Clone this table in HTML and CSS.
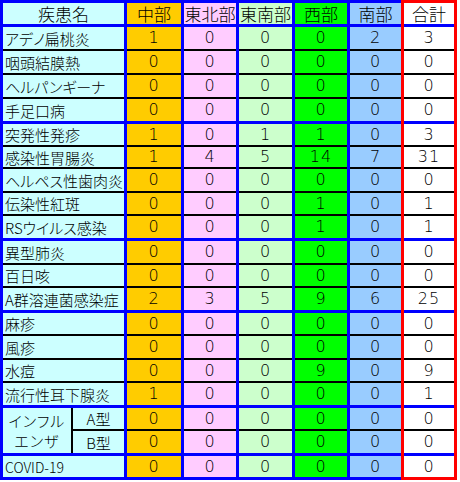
FILE: index.html
```html
<!DOCTYPE html>
<html lang="ja">
<head>
<meta charset="utf-8">
<title>疾患別報告数</title>
<link rel="stylesheet" href="styles.css">
</head>
<body>
<div class="board">
  <div class="main">
    <div class="col name">
      <div class="hd">疾患名</div>
      <div class="c h22 k">アデノ扁桃炎</div>
      <div class="c h22 k">咽頭結膜熱</div>
      <div class="c h22 k">ヘルパンギーナ</div>
      <div class="c h22 b">手足口病</div>
      <div class="c h21 k">突発性発疹</div>
      <div class="c h20 k">感染性胃腸炎</div>
      <div class="c h22 k">ヘルペス性歯肉炎</div>
      <div class="c h21 k">伝染性紅斑</div>
      <div class="c h22 b">RSウイルス感染</div>
      <div class="c h22 k">異型肺炎</div>
      <div class="c h21 k">百日咳</div>
      <div class="c h22 b">A群溶連菌感染症</div>
      <div class="c h21 k">麻疹</div>
      <div class="c h22 k">風疹</div>
      <div class="c h21 k">水痘</div>
      <div class="c h22 b">流行性耳下腺炎</div>
      <div class="flu">
        <div class="flu-name">インフル<br>エンザ</div>
        <div class="flu-types">
          <div class="c h21 k">A型</div>
          <div class="c h22">B型</div>
        </div>
      </div>
      <div class="c h21 covid">COVID-19</div>
    </div>
    <div class="col num chubu">
      <div class="hd">中部</div>
      <div class="c h22 k">1</div><div class="c h22 k">0</div><div class="c h22 k">0</div><div class="c h22 b">0</div>
      <div class="c h21 k">1</div><div class="c h20 k">1</div><div class="c h22 k">0</div><div class="c h21 k">0</div><div class="c h22 b">0</div>
      <div class="c h22 k">0</div><div class="c h21 k">0</div><div class="c h22 b">2</div>
      <div class="c h21 k">0</div><div class="c h22 k">0</div><div class="c h21 k">0</div><div class="c h22 b">1</div>
      <div class="c h21 k">0</div><div class="c h22 b">0</div><div class="c h21">0</div>
    </div>
    <div class="col num tohoku">
      <div class="hd">東北部</div>
      <div class="c h22 k">0</div><div class="c h22 k">0</div><div class="c h22 k">0</div><div class="c h22 b">0</div>
      <div class="c h21 k">0</div><div class="c h20 k">4</div><div class="c h22 k">0</div><div class="c h21 k">0</div><div class="c h22 b">0</div>
      <div class="c h22 k">0</div><div class="c h21 k">0</div><div class="c h22 b">3</div>
      <div class="c h21 k">0</div><div class="c h22 k">0</div><div class="c h21 k">0</div><div class="c h22 b">0</div>
      <div class="c h21 k">0</div><div class="c h22 b">0</div><div class="c h21">0</div>
    </div>
    <div class="col num tonan">
      <div class="hd">東南部</div>
      <div class="c h22 k">0</div><div class="c h22 k">0</div><div class="c h22 k">0</div><div class="c h22 b">0</div>
      <div class="c h21 k">1</div><div class="c h20 k">5</div><div class="c h22 k">0</div><div class="c h21 k">0</div><div class="c h22 b">0</div>
      <div class="c h22 k">0</div><div class="c h21 k">0</div><div class="c h22 b">5</div>
      <div class="c h21 k">0</div><div class="c h22 k">0</div><div class="c h21 k">0</div><div class="c h22 b">0</div>
      <div class="c h21 k">0</div><div class="c h22 b">0</div><div class="c h21">0</div>
    </div>
    <div class="col num seibu">
      <div class="hd">西部</div>
      <div class="c h22 k">0</div><div class="c h22 k">0</div><div class="c h22 k">0</div><div class="c h22 b">0</div>
      <div class="c h21 k">1</div><div class="c h20 k">14</div><div class="c h22 k">0</div><div class="c h21 k">1</div><div class="c h22 b">1</div>
      <div class="c h22 k">0</div><div class="c h21 k">0</div><div class="c h22 b">9</div>
      <div class="c h21 k">0</div><div class="c h22 k">0</div><div class="c h21 k">9</div><div class="c h22 b">0</div>
      <div class="c h21 k">0</div><div class="c h22 b">0</div><div class="c h21">0</div>
    </div>
    <div class="col num nanbu">
      <div class="hd">南部</div>
      <div class="c h22 k">2</div><div class="c h22 k">0</div><div class="c h22 k">0</div><div class="c h22 b">0</div>
      <div class="c h21 k">0</div><div class="c h20 k">7</div><div class="c h22 k">0</div><div class="c h21 k">0</div><div class="c h22 b">0</div>
      <div class="c h22 k">0</div><div class="c h21 k">0</div><div class="c h22 b">6</div>
      <div class="c h21 k">0</div><div class="c h22 k">0</div><div class="c h21 k">0</div><div class="c h22 b">0</div>
      <div class="c h21 k">0</div><div class="c h22 b">0</div><div class="c h21">0</div>
    </div>
  </div>
  <div class="col num total">
    <div class="hd">合計</div>
    <div class="c h22 k">3</div><div class="c h22 k">0</div><div class="c h22 k">0</div><div class="c h22 b">0</div>
    <div class="c h21 k">3</div><div class="c h20 k">31</div><div class="c h22 k">0</div><div class="c h21 k">1</div><div class="c h22 b">1</div>
    <div class="c h22 k">0</div><div class="c h21 k">0</div><div class="c h22 b">25</div>
    <div class="c h21 k">0</div><div class="c h22 k">0</div><div class="c h21 k">9</div><div class="c h22 b">1</div>
    <div class="c h21 k">0</div><div class="c h22 b">0</div><div class="c h21">0</div>
  </div>
</div>
</body>
</html>
```
FILE: styles.css
```css
html, body {
  margin: 0;
  padding: 0;
  background: #ffffff;
}

body {
  font-family: "Noto Sans CJK JP", "Noto Sans", sans-serif;
  font-weight: 300;
  font-feature-settings: "palt";
  color: #000000;
}

.board {
  display: flex;
  align-items: flex-start;
  width: 457px;
}

.main {
  display: flex;
  border: 3px solid #0000ff;
  border-right: none;
}

.col {
  display: flex;
  flex-direction: column;
  border-right: 3px solid #0000ff;
}

.main .col:last-child {
  border-right: none;
}

.name { width: 121px; background: #ccffff; }
.chubu { width: 54px; background: #ffcc00; }
.tohoku { width: 52px; background: #ffccff; }
.tonan { width: 53px; background: #ccffcc; }
.seibu { width: 52px; background: #00ff00; }
.nanbu { width: 51px; background: #99ccff; }

.total {
  width: 50px;
  background: #ffffff;
  border: 3px solid #ff0000;
}

.hd {
  height: 21px;
  border-bottom: 3px solid #0000ff;
  display: flex;
  align-items: center;
  justify-content: center;
  font-size: 17px;
  line-height: 1;
}

.c {
  display: flex;
  align-items: center;
  font-size: 15px;
  line-height: 1;
  white-space: nowrap;
  overflow: hidden;
}

.name .c {
  padding-left: 2px;
}

.num .c {
  justify-content: center;
  font-family: "DejaVu Sans", sans-serif;
  font-weight: 200;
  font-size: 16px;
  letter-spacing: 1px;
}

.h20 { height: 20px; }
.h21 { height: 21px; }
.h22 { height: 22px; }

.k { border-bottom: 2px solid #000000; }
.b { border-bottom: 3px solid #0000ff; }

.flu {
  display: flex;
  border-bottom: 3px solid #0000ff;
}

.flu-name {
  width: 68px;
  border-right: 2px solid #000000;
  display: flex;
  align-items: center;
  justify-content: center;
  text-align: center;
  font-size: 15px;
  line-height: 20px;
  letter-spacing: 1px;
}

.flu-types {
  width: 51px;
  display: flex;
  flex-direction: column;
}

.name .flu-types .c {
  padding-left: 0;
  justify-content: center;
}

.name .covid {
  font-size: 14px;
  letter-spacing: 0;
}
```
